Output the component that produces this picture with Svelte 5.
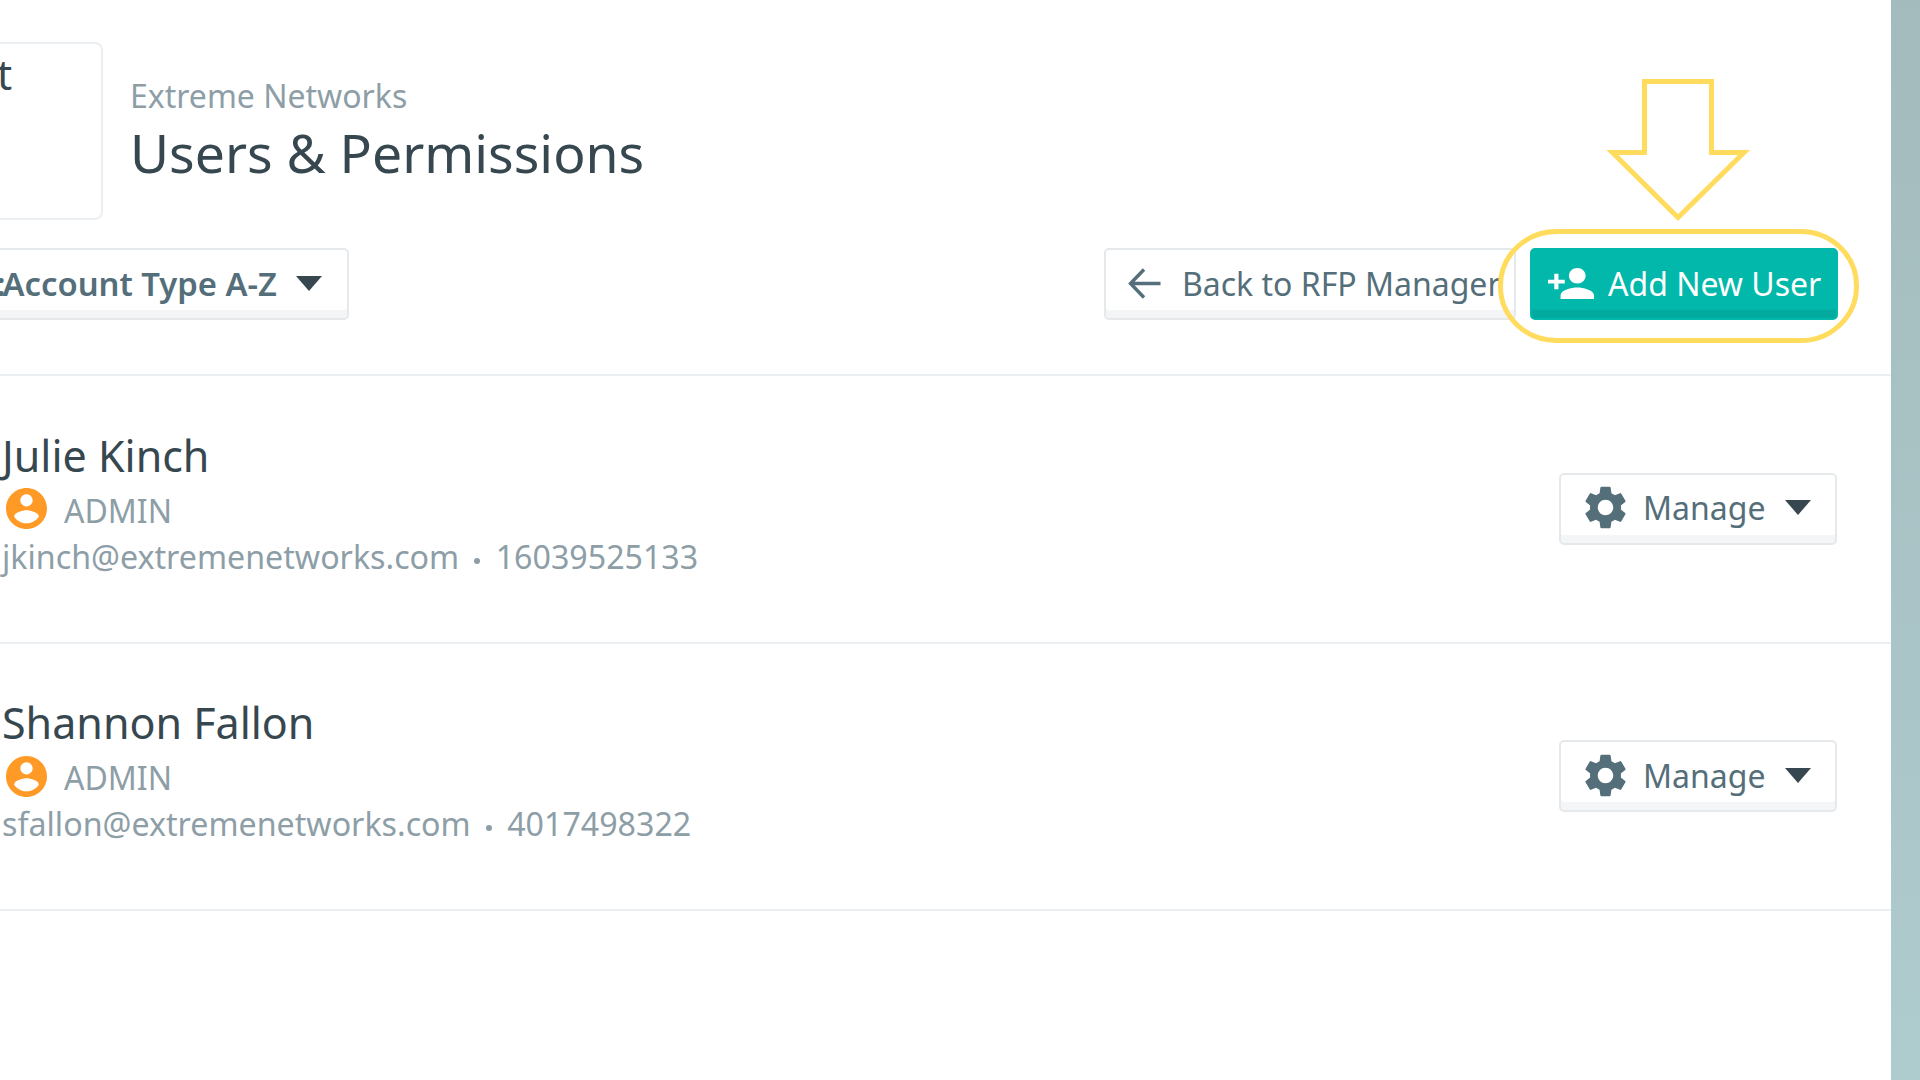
<script>
  const users = [
    { name: 'Julie Kinch', email: 'jkinch@extremenetworks.com', phone: '16039525133' },
    { name: 'Shannon Fallon', email: 'sfallon@extremenetworks.com', phone: '4017498322' }
  ];
</script>

<div class="page">
  <main class="main">
    <header class="head">
      <div class="logo"><span>t</span></div>
      <div class="titles">
        <div class="company">Extreme Networks</div>
        <h1>Users &amp; Permissions</h1>
      </div>
    </header>

    <div class="toolbar">
      <button class="btn sort">
        <span class="sort-label"><span class="sort-by">Sort by:</span>Account Type A-Z</span>
        <span class="caret"></span>
      </button>
      <div class="actions">
        <button class="btn back">
          <svg class="back-icon" viewBox="0 0 33 31" fill="none" stroke="currentColor" stroke-width="3.4">
            <path d="M32.5 15.5H3M16 1.5 2.5 15.5 16 29.5" />
          </svg>
          <span>Back to RFP Manager</span>
        </button>
        <button class="btn add">
          <svg class="add-icon" viewBox="1 4 22 16" fill="currentColor" preserveAspectRatio="none">
            <path d="M15 12c2.21 0 4-1.79 4-4s-1.79-4-4-4-4 1.79-4 4 1.79 4 4 4zm-9-2V7H4v3H1v2h3v3h2v-3h3v-2H6zm9 4c-2.67 0-8 1.34-8 4v2h16v-2c0-2.66-5.33-4-8-4z" />
          </svg>
          <span>Add New User</span>
        </button>
      </div>
    </div>

    <section class="list">
      {#each users as u}
        <article class="row">
          <div class="info">
            <div class="name">{u.name}</div>
            <div class="role">
              <svg class="role-icon" viewBox="2 2 20 20" fill="currentColor">
                <path d="M12 2C6.48 2 2 6.48 2 12s4.48 10 10 10 10-4.48 10-10S17.52 2 12 2zm0 3c1.66 0 3 1.34 3 3s-1.34 3-3 3-3-1.34-3-3 1.34-3 3-3zm0 14.2c-2.5 0-4.71-1.28-6-3.22.03-1.99 4-3.08 6-3.08 1.99 0 5.97 1.09 6 3.08-1.29 1.94-3.5 3.22-6 3.22z" />
              </svg>
              <span>ADMIN</span>
            </div>
            <div class="contact">
              <span>{u.email}</span>
              <span class="dot"></span>
              <span>{u.phone}</span>
            </div>
          </div>
          <button class="btn manage">
            <svg class="gear" viewBox="2.5 2 19 20" fill="currentColor">
              <path d="M19.14 12.94c.04-.3.06-.61.06-.94 0-.32-.02-.64-.07-.94l2.03-1.58c.18-.14.23-.41.12-.61l-1.92-3.32c-.12-.22-.37-.29-.59-.22l-2.39.96c-.5-.38-1.03-.7-1.62-.94l-.36-2.54c-.04-.24-.24-.41-.48-.41h-3.84c-.24 0-.43.17-.47.41l-.36 2.54c-.59.24-1.13.57-1.62.94l-2.39-.96c-.22-.08-.47 0-.59.22L2.74 8.87c-.12.21-.08.47.12.61l2.03 1.58c-.05.3-.09.63-.09.94s.02.64.07.94l-2.03 1.58c-.18.14-.23.41-.12.61l1.92 3.32c.12.22.37.29.59.22l2.39-.96c.5.38 1.03.7 1.62.94l.36 2.54c.05.24.24.41.48.41h3.84c.24 0 .44-.17.47-.41l.36-2.54c.59-.24 1.13-.56 1.62-.94l2.39.96c.22.08.47 0 .59-.22l1.92-3.32c.12-.22.07-.47-.12-.61l-2.01-1.58zM12 15.6c-1.98 0-3.6-1.62-3.6-3.6s1.62-3.6 3.6-3.6 3.6 1.62 3.6 3.6-1.62 3.6-3.6 3.6z" />
            </svg>
            <span>Manage</span>
            <span class="caret"></span>
          </button>
        </article>
      {/each}
    </section>
  </main>
  <div class="strip"></div>

  <svg class="annotation" viewBox="0 0 1920 1080" fill="none" stroke="#ffdc5e" stroke-width="5">
    <path d="M1644.500 81.500h67v71h32.500L1678 217.500 1612.500 152.500h32z" />
    <rect x="1500.500" y="231.500" width="356" height="109" rx="56" ry="54" />
  </svg>
</div>

<style>
  :global(body) {
    margin: 0;
    background: #fff;
  }
  .page {
    position: relative;
    display: flex;
    width: 1920px;
    height: 1080px;
    overflow: hidden;
    font-family: "Noto Sans", sans-serif;
    color: #37474f;
  }
  .main {
    flex: 1;
    min-width: 0;
    padding-top: 42px;
    box-sizing: border-box;
  }
  .strip {
    width: 29px;
    background: linear-gradient(180deg, #a4bbbd 0%, #aecbce 100%);
  }
  .head {
    display: flex;
    align-items: flex-start;
  }
  .logo {
    width: 301px;
    height: 178px;
    margin-left: -198px;
    box-sizing: border-box;
    border: 2px solid #eceff1;
    border-radius: 8px;
    font-size: 42px;
    line-height: 50px;
    padding: 5px 0 0 193px;
    color: #37474f;
  }
  .titles {
    margin-left: 27px;
    padding-top: 31px;
  }
  .company {
    font-size: 32px;
    line-height: 45px;
    color: #8d9ea7;
  }
  h1 {
    margin: 0;
    font-size: 53.500px;
    line-height: 70px;
    font-weight: 400;
    color: #37474f;
  }
  .toolbar {
    display: flex;
    justify-content: space-between;
    margin-top: 28px;
    padding-right: 53px;
  }
  .actions {
    display: flex;
    gap: 14px;
  }
  .btn {
    display: flex;
    align-items: center;
    height: 72px;
    box-sizing: border-box;
    border: 2px solid #e6e9eb;
    border-radius: 5px;
    background: #fff;
    box-shadow: inset 0 -8px 0 #f3f5f6;
    font-family: inherit;
    font-size: 32px;
    color: #546e7a;
    white-space: nowrap;
    padding: 0;
    padding-bottom: 2px;
  }
  .caret {
    width: 0;
    height: 0;
    border-left: 13px solid transparent;
    border-right: 13px solid transparent;
    border-top: 15px solid #37474f;
  }
  .sort {
    width: 451px;
    margin-left: -102px;
    justify-content: flex-end;
    padding-right: 25px;
    font-size: 32.800px;
    font-weight: 600;
  }
  .sort-by {
    margin-right: -3px;
  }
  .sort-label {
    margin-right: 19px;
  }
  .back {
    width: 412px;
    padding-left: 22px;
  }
  .back-icon {
    width: 33px;
    height: 31px;
    margin-right: 21px;
    flex: none;
  }
  .add {
    width: 308px;
    padding-left: 16px;
    background: #02b8aa;
    border-color: #02b8aa;
    box-shadow: inset 0 -8px 0 #02ab9e;
    color: #fff;
  }
  .add-icon {
    width: 46px;
    height: 31px;
    margin-right: 14px;
    flex: none;
  }
  .list {
    margin-top: 54px;
  }
  .row {
    display: flex;
    align-items: center;
    justify-content: space-between;
    height: 267.500px;
    box-sizing: border-box;
    border-top: 2px solid #eceff1;
    padding-right: 54px;
  }
  .row:last-child {
    height: 269.500px;
    border-bottom: 2px solid #eceff1;
  }
  .info {
    padding: 0 0 9px 2px;
  }
  .name {
    font-size: 43px;
    line-height: 48px;
    color: #37474f;
  }
  .role {
    display: flex;
    align-items: center;
    margin-top: 7px;
    font-size: 32px;
    line-height: 41px;
    color: #8d9ea7;
  }
  .role span {
    padding-top: 3px;
  }
  .role-icon {
    width: 41px;
    height: 41px;
    margin: 0 17px 0 4px;
    color: #ff9a26;
    flex: none;
  }
  .contact {
    display: flex;
    align-items: center;
    margin-top: 6px;
    font-size: 32.200px;
    line-height: 40px;
    color: #8d9ea7;
  }
  .dot {
    width: 6px;
    height: 6px;
    margin: 8px 15.500px 0 15px;
    border-radius: 50%;
    background: #8d9ea7;
  }
  .manage {
    width: 278px;
    padding-left: 24px;
  }
  .gear {
    width: 41px;
    height: 43px;
    margin-right: 17px;
    flex: none;
  }
  .manage .caret {
    margin-left: 20px;
  }
  .annotation {
    position: absolute;
    inset: 0;
    width: 1920px;
    height: 1080px;
    pointer-events: none;
  }
</style>
